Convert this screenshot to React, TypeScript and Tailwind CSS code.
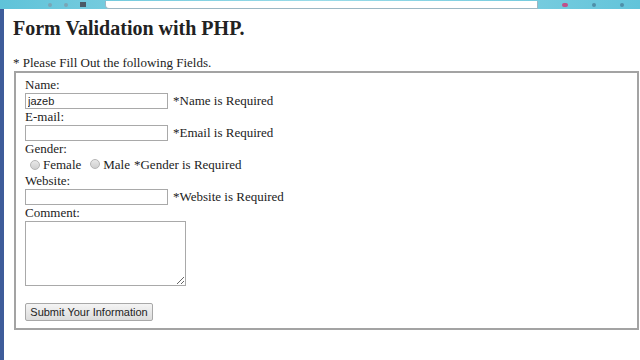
import React from 'react';

const serif = { fontFamily: '"Liberation Serif", "Times New Roman", serif' };

const Field: React.FC<{ label: string; error: string; value?: string }> = ({ label, error, value }) => (
    <>
        <div className="h-4 leading-4">{label}</div>
        <div className="flex h-4 items-center">
            <input
                readOnly
                value={value ?? ''}
                className="h-4 w-[143px] border border-[#a9a9a9] bg-white px-0.5 text-[11px] leading-none text-[#222] outline-none"
                style={{ fontFamily: '"Liberation Sans", Arial, sans-serif' }}
            />
            <span className="ml-[5px] leading-4">{error}</span>
        </div>
    </>
);

const Radio: React.FC = () => (
    <span className="inline-block h-[10px] w-[10px] rounded-full border border-[#b5b5b5] bg-gradient-to-b from-[#e8e8e8] to-[#cfcfcf]" />
);

export default function App() {
    return (
        <div className="h-[360px] w-[640px] overflow-hidden bg-white text-[#222]" style={serif}>
            {/* browser chrome strip */}
            <div className="flex h-[9px] items-end bg-gradient-to-r from-[#5fc3d9] via-[#9adbe8] to-[#62c4da]">
                <div className="flex h-full w-[105px] items-center gap-3 pl-12">
                    <span className="h-1 w-1 rounded-full bg-[#7aa5b5]" />
                    <span className="h-1 w-1 rounded-full bg-[#7aa5b5]" />
                    <span className="h-[5px] w-[6px] bg-[#4a5a66]" />
                </div>
                <div className="h-[8px] w-[433px] rounded-bl-sm border-b border-l border-r border-[#9cb7c4] bg-white" />
                <div className="flex h-full flex-1 items-center gap-6 pl-6">
                    <span className="h-1 w-1.5 rounded-full bg-[#c0508a]" />
                    <span className="h-1 w-1 rounded-full bg-[#4f8fa8]" />
                    <span className="h-1 w-1 rounded-full bg-[#4f8fa8]" />
                </div>
            </div>

            <div className="flex h-[351px]">
                <div className="w-[4px] bg-[#3e5c9a]" />
                <div className="flex-1 pl-[9px] pr-[1px]">
                    <h1 className="mt-[7px] text-[20px] font-bold leading-6">Form Validation with PHP.</h1>
                    <p className="mt-[15px] text-[13px] leading-4">* Please Fill Out the following Fields.</p>

                    <div className="ml-[1px] h-[259px] border-2 border-[#a3a3a3] pl-[9px] pt-[4px] text-[13px]">
                        <Field label="Name:" error="*Name is Required" value="jazeb" />
                        <Field label="E-mail:" error="*Email is Required" />

                        <div className="h-4 leading-4">Gender:</div>
                        <div className="flex h-4 items-center pl-[5px] leading-4">
                            <Radio />
                            <span className="ml-[3px]">Female</span>
                            <span className="ml-[9px]">
                                <Radio />
                            </span>
                            <span className="ml-[3px]">Male</span>
                            <span className="ml-[4px]">*Gender is Required</span>
                        </div>

                        <Field label="Website:" error="*Website is Required" />

                        <div className="h-4 leading-4">Comment:</div>
                        <textarea
                            readOnly
                            className="block h-[65px] w-[161px] border border-[#a9a9a9] bg-white outline-none"
                        />

                        <button
                            className="mt-[17px] h-[18px] w-[128px] rounded-[2px] border border-[#a8a8a8] bg-gradient-to-b from-[#f4f4f4] to-[#dcdcdc] text-[11px] leading-none text-[#222]"
                            style={{ fontFamily: '"Liberation Sans", Arial, sans-serif' }}
                        >
                            Submit Your Information
                        </button>
                    </div>
                </div>
            </div>
        </div>
    );
}
